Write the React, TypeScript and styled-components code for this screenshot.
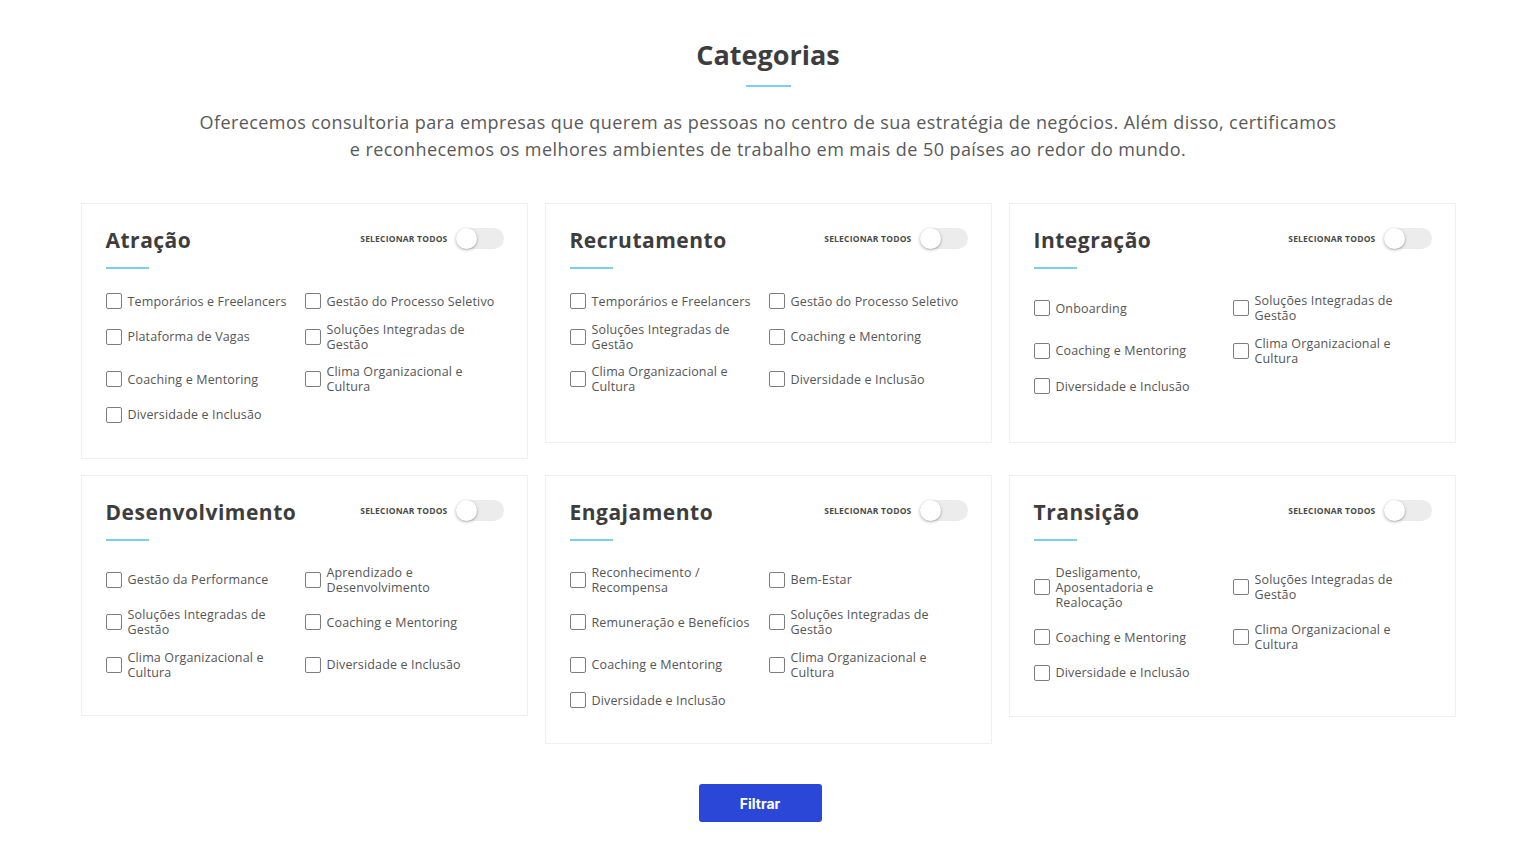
import React from 'react'
import styled, { createGlobalStyle } from 'styled-components';

const GlobalStyle = createGlobalStyle`
    body {
        margin: 0;
        background: #ffffff;
        font-family: "Open Sans", "Liberation Sans", sans-serif;
        color: #555555;
    }
`;

// labels with "\n" keep the line breaks seen in the layout
const categories = [
    {
        title: 'Atração',
        options: [
            'Temporários e Freelancers',
            'Gestão do Processo Seletivo',
            'Plataforma de Vagas',
            'Soluções Integradas de Gestão',
            'Coaching e Mentoring',
            'Clima Organizacional e Cultura',
            'Diversidade e Inclusão',
        ],
    },
    {
        title: 'Recrutamento',
        options: [
            'Temporários e Freelancers',
            'Gestão do Processo Seletivo',
            'Soluções Integradas de Gestão',
            'Coaching e Mentoring',
            'Clima Organizacional e Cultura',
            'Diversidade e Inclusão',
        ],
    },
    {
        title: 'Integração',
        options: [
            'Onboarding',
            'Soluções Integradas de Gestão',
            'Coaching e Mentoring',
            'Clima Organizacional e Cultura',
            'Diversidade e Inclusão',
        ],
    },
    {
        title: 'Desenvolvimento',
        options: [
            'Gestão da Performance',
            'Aprendizado e Desenvolvimento',
            'Soluções Integradas de Gestão',
            'Coaching e Mentoring',
            'Clima Organizacional e Cultura',
            'Diversidade e Inclusão',
        ],
    },
    {
        title: 'Engajamento',
        options: [
            'Reconhecimento / Recompensa',
            'Bem-Estar',
            'Remuneração e Benefícios',
            'Soluções Integradas de Gestão',
            'Coaching e Mentoring',
            'Clima Organizacional e Cultura',
            'Diversidade e Inclusão',
        ],
    },
    {
        title: 'Transição',
        options: [
            'Desligamento,\nAposentadoria e\nRealocação',
            'Soluções Integradas de Gestão',
            'Coaching e Mentoring',
            'Clima Organizacional e Cultura',
            'Diversidade e Inclusão',
        ],
    },
];

const Section = styled.section`
    display: flex;
    flex-direction: column;
    align-items: center;
    padding: 38px 80px 40px;
`;

const Heading = styled.h2`
    margin: 0;
    font-size: 27px;
    line-height: 34px;
    font-weight: 700;
    color: #3d3d3d;
`;

const Accent = styled.div<{ width: number }>`
    width: ${props => props.width}px;
    height: 2px;
    background: #79cff1;
`;

const HeadingAccent = styled(Accent)`
    margin-top: 13px;
`;

const Lead = styled.p`
    margin: 22px 0 40px;
    max-width: 1145px;
    text-align: center;
    font-size: 18px;
    line-height: 27px;
    letter-spacing: 0.42px;
    color: #595959;
`;

const Grid = styled.div`
    display: grid;
    grid-template-columns: repeat(3, 447px);
    gap: 17px 17px;
    row-gap: 16px;
    align-items: start;
`;

const Card = styled.div`
    box-sizing: border-box;
    min-height: 240px;
    padding: 24px 23px 35px 24px;
    border: 1px solid #f0f0f0;
    background: #ffffff;
`;

const CardHeader = styled.div`
    display: flex;
    align-items: center;
    justify-content: space-between;
`;

const CardTitle = styled.h3`
    margin: 0;
    font-size: 21px;
    line-height: 24px;
    font-weight: 700;
    letter-spacing: 0.5px;
    color: #3d3d3d;
`;

const SelectAll = styled.label`
    display: flex;
    align-items: center;
    gap: 8px;
    font-size: 8.5px;
    font-weight: 700;
    letter-spacing: 0.2px;
    text-transform: uppercase;
    color: #4a4a4a;
    margin-top: -3px;
`;

const Switch = styled.span`
    position: relative;
    width: 48px;
    height: 21px;
    border-radius: 11px;
    background: #ececec;
`;

const Knob = styled.span`
    position: absolute;
    left: 0;
    top: 0;
    width: 21px;
    height: 21px;
    border-radius: 50%;
    background: #ffffff;
    box-shadow: 0 1px 3px rgba(0, 0, 0, 0.35);
`;

const CardAccent = styled(Accent)`
    margin-top: 15px;
`;

const Options = styled.div`
    display: grid;
    grid-template-columns: 1fr 1fr;
    row-gap: 12.5px;
    margin-top: 24px;
`;

const Option = styled.label`
    display: flex;
    align-items: center;
    gap: 6px;
    padding-right: 8px;
`;

const Box = styled.span`
    flex: none;
    box-sizing: border-box;
    width: 16px;
    height: 16px;
    border: 1px solid #7d7d7d;
    border-radius: 2px;
    background: #ffffff;
`;

const OptionText = styled.span`
    font-size: 12.5px;
    line-height: 15px;
    letter-spacing: 0.15px;
    white-space: pre-line;
    color: #555555;
`;

const FilterButton = styled.button`
    margin-top: 40px;
    margin-right: 16px;
    width: 123px;
    height: 38px;
    border: none;
    border-radius: 3px;
    background: #2b47d7;
    color: #ffffff;
    font-family: "Inter", "Open Sans", sans-serif;
    font-size: 14px;
    font-weight: 700;
    cursor: pointer;
`;

export default function App() {
    return (
        <>
            <GlobalStyle />
            <Section>
                <Heading>Categorias</Heading>
                <HeadingAccent width={45} />
                <Lead>
                    Oferecemos consultoria para empresas que querem as pessoas no centro de sua estratégia de negócios. Além disso, certificamos e reconhecemos os melhores ambientes de trabalho em mais de 50 países ao redor do mundo.
                </Lead>

                <Grid>
                    {categories.map(category => (
                        <Card key={category.title}>
                            <CardHeader>
                                <CardTitle>{category.title}</CardTitle>
                                <SelectAll>
                                    Selecionar todos
                                    <Switch><Knob /></Switch>
                                </SelectAll>
                            </CardHeader>
                            <CardAccent width={43} />
                            <Options>
                                {category.options.map(option => (
                                    <Option key={option}>
                                        <Box />
                                        <OptionText>{option}</OptionText>
                                    </Option>
                                ))}
                            </Options>
                        </Card>
                    ))}
                </Grid>

                <FilterButton>Filtrar</FilterButton>
            </Section>
        </>
    )
}
